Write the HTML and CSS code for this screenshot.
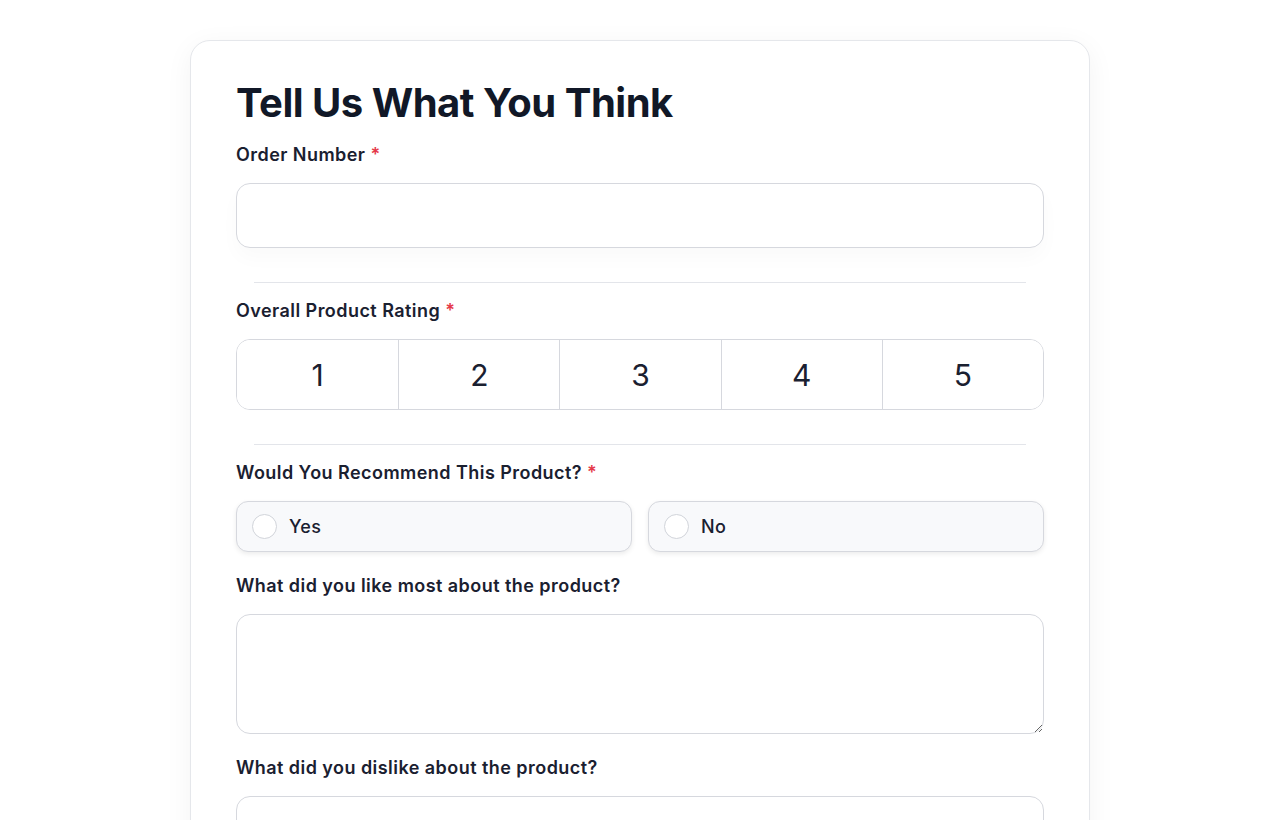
FILE: index.html
```html
<!DOCTYPE html>
<html lang="en">
<head>
    <meta charset="UTF-8">
    <meta name="viewport" content="width=device-width, initial-scale=1.0">
    <title>Product Feedback</title>
    <link rel="stylesheet" href="styles.css">
</head>
<body>
    <div class="form-card">
        <h1>Tell Us What You Think</h1>

        <div class="field">
            <label class="field-label" for="order">Order Number <span class="req">*</span></label>
            <input type="text" id="order" class="text-input">
        </div>

        <hr class="divider">

        <div class="field">
            <div class="field-label">Overall Product Rating <span class="req">*</span></div>
            <div class="rating">
                <button class="rating-btn">1</button>
                <button class="rating-btn">2</button>
                <button class="rating-btn">3</button>
                <button class="rating-btn">4</button>
                <button class="rating-btn">5</button>
            </div>
        </div>

        <hr class="divider">

        <div class="field">
            <div class="field-label">Would You Recommend This Product? <span class="req">*</span></div>
            <div class="choices">
                <label class="choice">
                    <span class="radio"></span>
                    Yes
                </label>
                <label class="choice">
                    <span class="radio"></span>
                    No
                </label>
            </div>
        </div>

        <div class="field">
            <label class="field-label" for="liked">What did you like most about the product?</label>
            <textarea id="liked" class="text-area"></textarea>
        </div>

        <div class="field">
            <label class="field-label" for="disliked">What did you dislike about the product?</label>
            <textarea id="disliked" class="text-area"></textarea>
        </div>
    </div>
</body>
</html>
```

FILE: styles.css
```css
* {
    margin: 0;
    padding: 0;
    box-sizing: border-box;
}

body {
    font-family: Inter, 'Noto Sans', sans-serif;
    background-color: #ffffff;
    color: #111827;
    padding-top: 40px;
}

.form-card {
    width: 900px;
    margin: 0 auto 40px;
    background: #ffffff;
    border: 1px solid #e5e7eb;
    border-radius: 20px;
    padding: 38px 45px;
    box-shadow: 0 6px 28px rgba(0, 0, 0, 0.05);
}

h1 {
    font-size: 40px;
    line-height: 48px;
    font-weight: 700;
    letter-spacing: -0.5px;
    color: #111827;
    margin-bottom: 14px;
}

.field {
    margin-bottom: 20px;
}

.field-label {
    display: block;
    font-size: 18px;
    line-height: 27px;
    font-weight: 600;
    letter-spacing: 0.45px;
    color: #1a2030;
    margin-bottom: 15px;
}

.req {
    color: #e5394a;
}

.text-input {
    display: block;
    width: 100%;
    height: 65px;
    border: 1px solid #d6d8de;
    border-radius: 14px;
    padding: 0 18px;
    font-size: 18px;
    font-family: inherit;
    outline: none;
    box-shadow: 0 10px 20px rgba(0, 0, 0, 0.025);
}

.divider {
    border: none;
    border-top: 1px solid #e3e5ea;
    margin: 34px 18px 14px;
}

.rating {
    display: grid;
    grid-template-columns: repeat(5, 1fr);
    height: 71px;
    border: 1px solid #d6d8de;
    border-radius: 14px;
    overflow: hidden;
}

.rating-btn {
    border: none;
    border-left: 1px solid #d6d8de;
    background: #ffffff;
    font-family: inherit;
    font-size: 30px;
    font-weight: 400;
    color: #1a2030;
    cursor: pointer;
}

.rating-btn:first-child {
    border-left: none;
}

.choices {
    display: grid;
    grid-template-columns: 1fr 1fr;
    gap: 16px;
}

.choice {
    display: flex;
    align-items: center;
    gap: 12px;
    height: 51px;
    padding: 0 15px;
    background: #f8f9fb;
    border: 1px solid #d6d8de;
    border-radius: 12px;
    box-shadow: 0 2px 5px rgba(0, 0, 0, 0.08);
    font-size: 18px;
    font-weight: 500;
    letter-spacing: 0.3px;
    color: #1a2030;
    cursor: pointer;
}

.radio {
    width: 25px;
    height: 25px;
    border: 1px solid #d1d4da;
    border-radius: 50%;
    background: #ffffff;
}

.text-area {
    display: block;
    width: 100%;
    height: 120px;
    border: 1px solid #d6d8de;
    border-radius: 14px;
    padding: 14px 18px;
    font-size: 18px;
    font-family: inherit;
    outline: none;
    resize: vertical;
}
```
